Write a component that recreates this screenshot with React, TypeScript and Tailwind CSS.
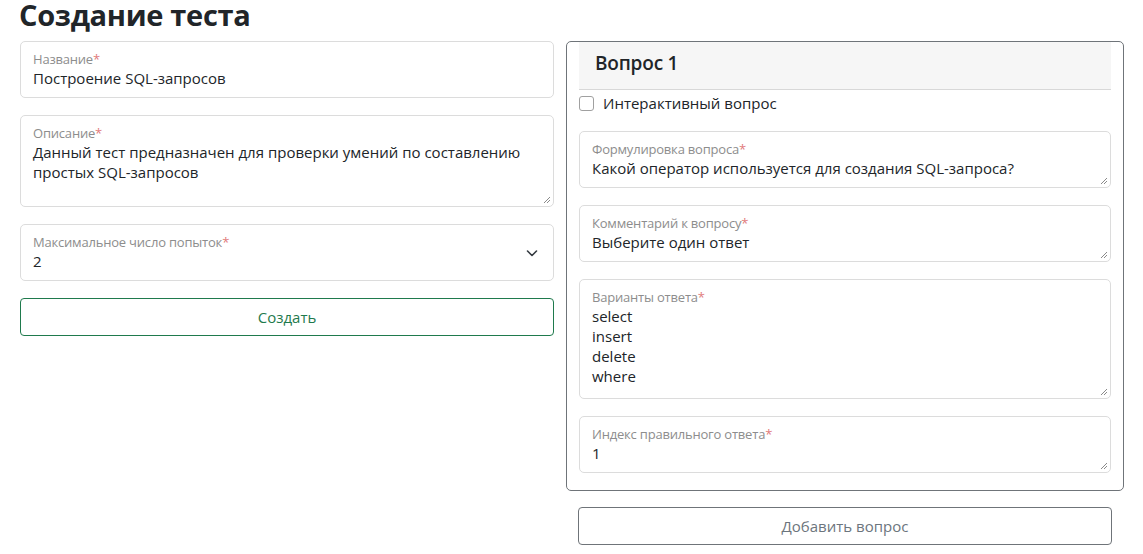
import React from "react";

const font = { fontFamily: '"Open Sans", "Noto Sans", sans-serif' };

function Grip() {
  return (
    <svg className="absolute right-[2px] bottom-[2px]" width="8" height="8" viewBox="0 0 8 8">
      <path d="M7 1 L1 7 M7 4 L4 7" stroke="#8a8a8a" strokeWidth="1" fill="none" />
    </svg>
  );
}

function Field({
  label,
  lines,
  h,
  grip,
  chevron,
}: {
  label: string;
  lines: string[];
  h: string;
  grip?: boolean;
  chevron?: boolean;
}) {
  return (
    <div className={`relative border border-[#dcdcdc] rounded-[5px] bg-white px-3 pt-[8px] ${h}`}>
      <div className="text-[13px] leading-[18px] text-[#8d8d8d] tracking-[-0.2px]">
        {label}
        <span className="text-[#e17b7b]">*</span>
      </div>
      <div className="text-[15px] leading-[20px] text-[#212529]">
        {lines.map((l, i) => (
          <div key={i}>{l}</div>
        ))}
      </div>
      {grip && <Grip />}
      {chevron && (
        <svg className="absolute right-[15px] top-[23px]" width="12" height="10" viewBox="0 0 12 10">
          <path d="M1.5 3 L6 7.5 L10.5 3" stroke="#343a40" strokeWidth="1.6" fill="none" strokeLinecap="round" strokeLinejoin="round" />
        </svg>
      )}
    </div>
  );
}

export default function App() {
  return (
    <div className="w-[1143px] h-[554px] bg-white overflow-hidden" style={font}>
      <h2 className="pl-[19px] text-[29px] leading-[30px] font-bold text-[#212529] tracking-[-0.3px]">
        Создание теста
      </h2>
      <div className="flex gap-[12px] pl-[20px] mt-[11px]">
        <div className="w-[534px] flex flex-col gap-[17px]">
          <Field label="Название" lines={["Построение SQL-запросов"]} h="h-[57px]" />
          <Field
            label="Описание"
            lines={["Данный тест предназначен для проверки умений по составлению", "простых SQL-запросов"]}
            h="h-[92px]"
            grip
          />
          <Field label="Максимальное число попыток" lines={["2"]} h="h-[57px]" chevron />
          <button className="h-[38px] border border-[#1f7a4d] rounded-[4px] text-[#1f7a4d] text-[15px]">
            Создать
          </button>
        </div>
        <div className="w-[558px] flex flex-col">
          <div className="border border-[#6f7479] rounded-[5px] px-[12px] h-[450px]">
            <div className="h-[48px] bg-[#f6f6f6] border-b border-[#d8d8d8] flex items-center pl-[16px] pb-[4px]">
              <span className="text-[19px] font-semibold text-[#212529] tracking-[-0.2px]">Вопрос 1</span>
            </div>
            <div className="flex items-center gap-[9px] h-[24px] mt-[1px]">
              <span className="w-[15px] h-[15px] border border-[#a0a0a0] rounded-[3px] bg-white" />
              <span className="text-[15px] text-[#212529]">Интерактивный вопрос</span>
            </div>
            <div className="flex flex-col gap-[17px] mt-[16px]">
              <Field
                label="Формулировка вопроса"
                lines={["Какой оператор используется для создания SQL-запроса?"]}
                h="h-[57px]"
                grip
              />
              <Field label="Комментарий к вопросу" lines={["Выберите один ответ"]} h="h-[57px]" grip />
              <Field
                label="Варианты ответа"
                lines={["select", "insert", "delete", "where"]}
                h="h-[120px]"
                grip
              />
              <Field label="Индекс правильного ответа" lines={["1"]} h="h-[57px]" grip />
            </div>
          </div>
          <button className="mt-[16px] ml-[12px] w-[534px] h-[38px] border border-[#6f7479] rounded-[4px] text-[#6c757d] text-[15px]">
            Добавить вопрос
          </button>
        </div>
      </div>
    </div>
  );
}
